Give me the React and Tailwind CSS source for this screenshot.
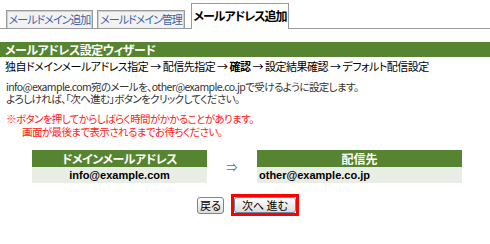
export default function App() {
  const jp = { fontFamily: '"Noto Sans CJK JP", "Noto Sans", sans-serif' };
  return (
    <div className="w-[490px] h-[244px] bg-white overflow-hidden text-black [font-feature-settings:'palt']" style={jp}>
      {/* Tabs */}
      <div className="flex items-end h-[29px] border-b border-[#9a9a9a] pl-[6px]">
        <div className="h-[18px] w-[87px] border border-b-0 border-[#9a9a9a] bg-[#f2f2f2] shadow-[inset_1px_1px_0_#d0d0d0,inset_-1px_0_0_#d0d0d0] flex items-center justify-center text-[11px] text-[#3a63a8] tracking-[-1px] leading-none whitespace-nowrap">
          メールドメイン追加
        </div>
        <div className="ml-[4px] h-[18px] w-[88px] border border-b-0 border-[#9a9a9a] bg-[#f2f2f2] shadow-[inset_1px_1px_0_#d0d0d0,inset_-1px_0_0_#d0d0d0] flex items-center justify-center text-[11px] text-[#3a63a8] tracking-[-1px] leading-none whitespace-nowrap">
          メールドメイン管理
        </div>
        <div className="ml-[6px] h-[26px] w-[98px] border border-b-0 border-[#9a9a9a] bg-white flex items-center justify-center text-[12px] font-bold tracking-[-1px] leading-none mb-[-1px] pb-[1px] whitespace-nowrap">
          メールアドレス追加
        </div>
      </div>

      {/* Wizard bar */}
      <div className="mt-[13px] h-[15px] bg-[#578430] text-white font-bold text-[12px] leading-[15px] pl-[5px] tracking-[-0.5px] whitespace-nowrap">
        メールアドレス設定ウィザード
      </div>
      <div className="mt-[2px] pl-[5px] text-[11px] leading-[14px] tracking-[-0.5px] whitespace-nowrap">
        独自ドメインメールアドレス指定 → 配信先指定 → <span className="font-bold">確認</span> → 設定結果確認 → デフォルト配信設定
      </div>

      {/* Description */}
      <div className="mt-[8px] pl-[6px] text-[10.5px] leading-[12px] text-[#333] tracking-[-0.6px] whitespace-nowrap">
        <div>info@example.com宛のメールを、other@example.co.jpで受けるように設定します。</div>
        <div>よろしければ、「次へ進む」ボタンをクリックしてください。</div>
      </div>

      <div className="mt-[7px] pl-[6px] text-[10.5px] leading-[13px] text-[#ff2020] tracking-[-0.6px] whitespace-nowrap">
        <div>※ボタンを押してからしばらく時間がかかることがあります。</div>
        <div className="pl-[16px]">画面が最後まで表示されるまでお待ちください。</div>
      </div>

      {/* Table */}
      <div className="mt-[12px] flex items-start">
        <div className="ml-[32px] w-[175px]">
          <div className="h-[17px] bg-[#578430] text-white font-bold text-[12px] leading-[17px] text-center tracking-[-0.5px]">
            ドメインメールアドレス
          </div>
          <div className="h-[16px] bg-[#e8ede6] font-bold text-[11px] leading-[16px] text-center" style={{ fontFamily: '"Liberation Sans", Arial, sans-serif' }}>
            info@example.com
          </div>
        </div>
        <div className="w-[50px] h-[33px] flex items-center justify-center text-[11px] text-[#666] pt-[1px]">
          ⇒
        </div>
        <div className="w-[205px]">
          <div className="h-[17px] bg-[#578430] text-white font-bold text-[12px] leading-[17px] text-center">
            配信先
          </div>
          <div className="h-[16px] bg-[#e8ede6] font-bold text-[11px] leading-[16px] pl-[2px]" style={{ fontFamily: '"Liberation Sans", Arial, sans-serif' }}>
            other@example.co.jp
          </div>
        </div>
      </div>

      {/* Buttons */}
      <div className="mt-[11px] flex items-center pl-[197px]">
        <button className="h-[17px] w-[27px] rounded-[3px] border border-[#6d86a8] bg-gradient-to-b from-[#ffffff] to-[#dcdcdc] text-[11px] leading-none text-black flex items-center justify-center">
          戻る
        </button>
        <div className="ml-[7px] border-[3px] border-[#ff0000] p-0">
          <button className="h-[16px] w-[62px] rounded-[3px] border border-[#6d86a8] bg-gradient-to-b from-[#ffffff] to-[#dcdcdc] text-[11px] leading-none text-black flex items-center justify-center">
            次へ 進む
          </button>
        </div>
      </div>
    </div>
  );
}
